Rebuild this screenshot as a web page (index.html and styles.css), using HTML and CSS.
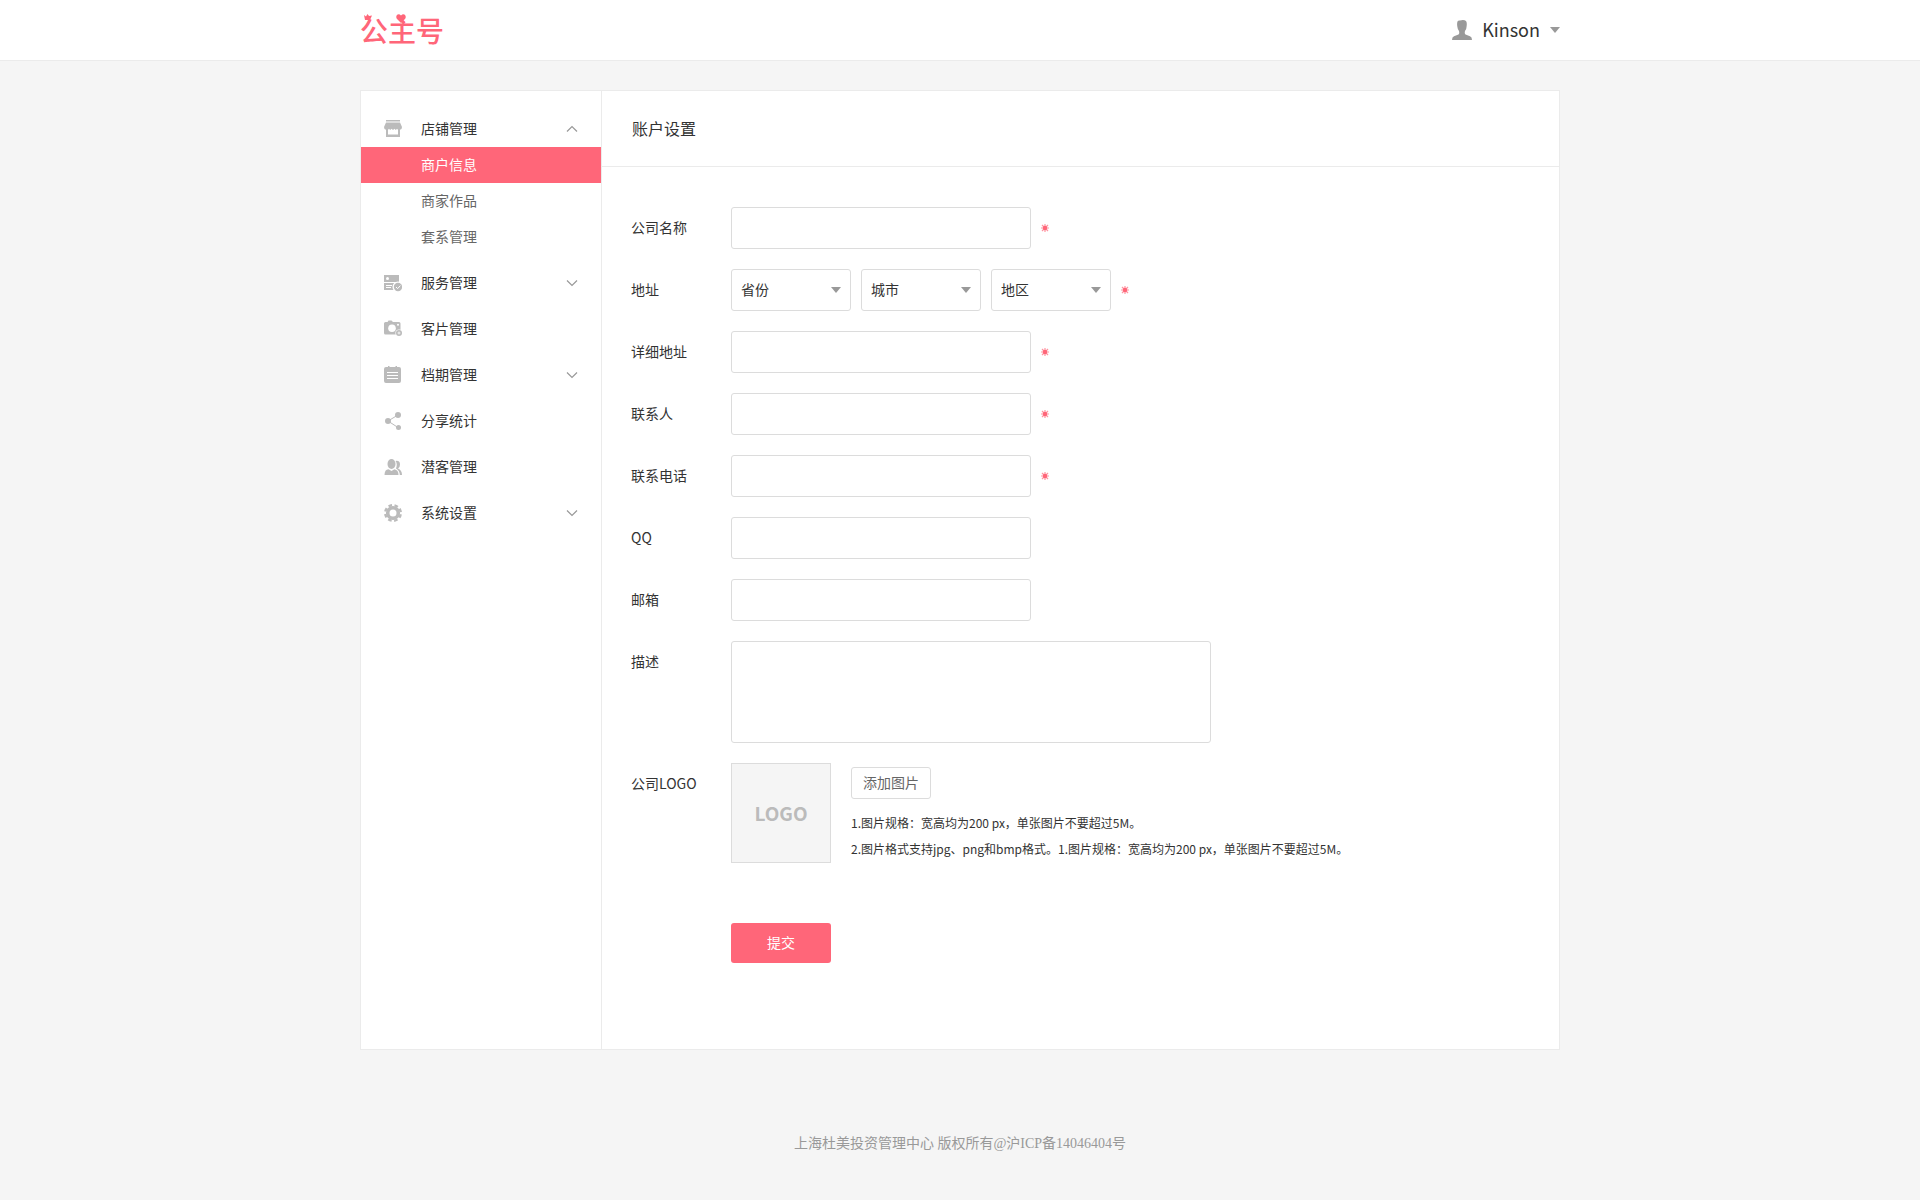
FILE: index.html
```html
<!DOCTYPE html>
<html lang="zh-CN">
<head>
<meta charset="utf-8">
<meta name="viewport" content="width=device-width, initial-scale=1">
<title>账户设置 - 公主号</title>
<link rel="stylesheet" href="styles.css">
</head>
<body>
<svg class="defs" aria-hidden="true">
  <symbol id="required" viewBox="0 0 8 8">
    <path d="M4 0v8M0 4h8M1 1l6 6M7 1l-6 6" fill="none" stroke="#ff6679" stroke-width="1.200" opacity=".7"/>
    <circle cx="4" cy="4" r="2.200" fill="#ff6679"/>
  </symbol>
  <symbol id="chevron" viewBox="0 0 12 8">
    <path d="M1 1.500l5 5 5-5" fill="none" stroke="#999" stroke-width="1.200"/>
  </symbol>
</svg>

<header class="topbar">
  <div class="container topbar-inner">
    <a class="brand" href="#">公主号
      <svg class="brand-crown" viewBox="0 0 8 7" aria-hidden="true"><path d="M0 1l2 1.500L3.500 0 5 2l3-.5L6 6H1z"/></svg>
      <svg class="brand-heart" viewBox="0 0 10 9" aria-hidden="true"><path d="M5 9L.8 4.700C-1 2 2-1.500 5 1.400 8-1.500 11 2 9.200 4.700z"/></svg>
    </a>
    <button class="user" type="button">
      <svg class="user-icon" viewBox="0 0 20 20" aria-hidden="true"><path d="M5.500 1.500Q6 .3 8 .5q4-1 6 .5 1.200 1.500.6 5.500 0 2.500-1.600 4.500-.7 3 .5 3.500l4.500 1.800Q20 17 20 20H0q0-3 2-3.700l4.500-1.800q1.200-.5.500-3.500-1.500-2-1.700-4.500-.5-3 .2-5z" fill="#999"/></svg>
      <span class="user-name">Kinson</span>
      <span class="caret"></span>
    </button>
  </div>
</header>

<div class="container panel">
  <nav class="sidebar">
    <section>
      <a class="nav-item" href="#">
        <svg class="nav-icon" viewBox="0 0 18 18"><path d="M2 0h14v1.500H2zM2 2.500h14L18 7q0 2.500-2 2.700V17H2V9.700Q0 9.500 0 7z"/><path d="M4 14.500V9.800l1-1 1.200 1.200L7.500 8.800 9 10l1.500-1.200L11.800 10 13 8.800l1 1v4.700z" fill="#fff"/></svg>
        <span>店铺管理</span>
        <svg class="chevron chevron-up"><use href="#chevron"/></svg>
      </a>
      <a class="sub-item active" href="#">商户信息</a>
      <a class="sub-item" href="#">商家作品</a>
      <a class="sub-item" href="#">套系管理</a>
    </section>
    <a class="nav-item" href="#">
      <svg class="nav-icon" viewBox="0 0 18 18"><path d="M0 1h15v15H0z"/><circle cx="3.500" cy="4.500" r="1.500" fill="#fff"/><path d="M0 8.500h15M2 11.500h6M2 13.500h5" fill="none" stroke="#fff"/><circle cx="14" cy="13" r="5.500" fill="#fff"/><circle cx="14" cy="13" r="4.200"/><path d="M12 13l1.600 1.600 2.800-3" fill="none" stroke="#fff"/></svg>
      <span>服务管理</span>
      <svg class="chevron"><use href="#chevron"/></svg>
    </a>
    <a class="nav-item" href="#">
      <svg class="nav-icon" viewBox="0 0 18 18"><path d="M1.500 2H3.500l1-1.500h3L9 2h6q1.500 0 1.500 1.500V14.500H1.500Q0 14.500 0 13V3.500Q0 2 1.500 2z"/><circle cx="8" cy="8.300" r="3.800" fill="#fff"/><circle cx="14" cy="4.800" r="1" fill="#fff"/><circle cx="15" cy="13" r="3.600" fill="#fff"/><circle cx="15" cy="13" r="3"/><path d="M15 11.500v3M13.500 13h3" stroke="#fff" stroke-width=".8"/></svg>
      <span>客片管理</span>
    </a>
    <a class="nav-item" href="#">
      <svg class="nav-icon" viewBox="0 0 18 18"><path d="M2 1h2V0h1.500v1h6V0H13v1h2q2 0 2 2v12q0 2-2 2H2q-2 0-2-2V3q0-2 2-2z"/><path d="M3 6.500h11M3 9.500h11M3 12.500h11" stroke="#fff"/></svg>
      <span>档期管理</span>
      <svg class="chevron"><use href="#chevron"/></svg>
    </a>
    <a class="nav-item" href="#">
      <svg class="nav-icon" viewBox="0 0 18 18"><path d="M14 3L4 9l10 6.500" fill="none" stroke="#bbb"/><circle cx="14" cy="3" r="3"/><circle cx="4" cy="9" r="3"/><circle cx="14.500" cy="15.500" r="2.500"/></svg>
      <span>分享统计</span>
    </a>
    <a class="nav-item" href="#">
      <svg class="nav-icon" viewBox="0 0 18 18"><ellipse cx="7.500" cy="6" rx="4" ry="5"/><path d="M.5 17q0-5.500 4-5.800L7.500 13l3-1.800Q14.500 12 14.500 17zM12 10.500q1.800-4.500-.5-7.500 4.500-.8 4.500 3.500 0 3-2 4 4 1.500 4 6.500h-2.200q0-4.500-3.800-6.500z"/></svg>
      <span>潜客管理</span>
    </a>
    <a class="nav-item" href="#">
      <svg class="nav-icon" viewBox="0 0 18 18"><circle cx="9" cy="9" r="5.300" fill="none" stroke="#bbb" stroke-width="3.600"/><circle cx="9" cy="9" r="7.800" fill="none" stroke="#bbb" stroke-width="2.400" stroke-dasharray="3.600 2.526" stroke-dashoffset="-1.300"/></svg>
      <span>系统设置</span>
      <svg class="chevron"><use href="#chevron"/></svg>
    </a>
  </nav>

  <main class="content">
    <h1 class="title">账户设置</h1>
    <form class="form">
      <div class="row">
        <label class="label" for="company">公司名称</label>
        <input class="field" id="company" type="text" required>
        <svg class="required"><use href="#required"/></svg>
      </div>
      <div class="row">
        <label class="label" for="province">地址</label>
        <div class="selects">
          <div class="select"><select class="field" id="province"><option>省份</option></select></div>
          <div class="select"><select class="field" aria-label="城市"><option>城市</option></select></div>
          <div class="select"><select class="field" aria-label="地区"><option>地区</option></select></div>
        </div>
        <svg class="required"><use href="#required"/></svg>
      </div>
      <div class="row">
        <label class="label" for="address">详细地址</label>
        <input class="field" id="address" type="text" required>
        <svg class="required"><use href="#required"/></svg>
      </div>
      <div class="row">
        <label class="label" for="contact">联系人</label>
        <input class="field" id="contact" type="text" required>
        <svg class="required"><use href="#required"/></svg>
      </div>
      <div class="row">
        <label class="label" for="phone">联系电话</label>
        <input class="field" id="phone" type="tel" required>
        <svg class="required"><use href="#required"/></svg>
      </div>
      <div class="row">
        <label class="label" for="qq">QQ</label>
        <input class="field" id="qq" type="text">
      </div>
      <div class="row">
        <label class="label" for="email">邮箱</label>
        <input class="field" id="email" type="email">
      </div>
      <div class="row">
        <label class="label" for="description">描述</label>
        <textarea class="field description" id="description"></textarea>
      </div>
      <div class="row">
        <span class="label">公司LOGO</span>
        <div class="logo-preview">LOGO</div>
        <div class="upload">
          <button class="add-image" type="button">添加图片</button>
          <p>1.图片规格：宽高均为200 px，单张图片不要超过5M。</p>
          <p>2.图片格式支持jpg、png和bmp格式。1.图片规格：宽高均为200 px，单张图片不要超过5M。</p>
        </div>
      </div>
      <button class="submit" type="submit">提交</button>
    </form>
  </main>
</div>

<footer class="footer">上海杜美投资管理中心 版权所有@沪ICP备14046404号</footer>
</body>
</html>
```
FILE: styles.css
```css
* { box-sizing: border-box; }

body {
  margin: 0;
  background: #f5f5f5;
  color: #333;
  font: 14px/20px "Noto Sans CJK SC", sans-serif;
}

a { color: inherit; text-decoration: none; }
button, input, select, textarea { font: inherit; color: inherit; }
button { cursor: pointer; }
p, h1 { margin: 0; }
.defs { display: none; }

.container {
  width: 100%;
  max-width: 1200px;
  margin: 0 auto;
}

.topbar { background: #fff; border-bottom: 1px solid #ebebeb; }

.topbar-inner {
  display: flex;
  align-items: center;
  justify-content: space-between;
  height: 60px;
}

.brand {
  position: relative;
  color: #ff6679;
  font-size: 28px;
  font-weight: 500;
  line-height: 40px;
}

.brand svg { position: absolute; fill: #ff6679; }
.brand-crown { left: 4px; top: 4px; width: 8px; height: 7px; }
.brand-heart { left: 36px; top: 4px; width: 10px; height: 9px; }

.user {
  display: flex;
  align-items: center;
  gap: 10px;
  padding: 0;
  border: 0;
  background: none;
  font-size: 18px;
}

.user-icon { width: 20px; height: 20px; }
.user-name { padding-bottom: 2px; }

.caret, .select::after {
  content: "";
  border: solid transparent;
  border-width: 6px 5px 0;
  border-top-color: #999;
}

.panel {
  display: flex;
  margin-top: 29px;
  min-height: 960px;
  background: #fff;
  border: 1px solid #ebebeb;
}

.sidebar {
  display: flex;
  flex: none;
  flex-direction: column;
  gap: 8px;
  width: 241px;
  padding-top: 18px;
  border-right: 1px solid #ebebeb;
}

.nav-item {
  display: flex;
  align-items: center;
  gap: 19px;
  height: 38px;
  padding: 0 23px;
}

.nav-icon { width: 18px; height: 18px; margin-top: 2px; fill: #bbb; }
.chevron { width: 12px; height: 8px; margin: 2px 0 0 auto; }
.chevron-up { transform: rotate(180deg); }

.sub-item {
  display: block;
  height: 36px;
  padding-left: 60px;
  color: #666;
  line-height: 34px;
}

.sub-item.active { background: #ff6679; color: #fff; }

.content { flex: 1; min-width: 0; }

.title {
  padding: 0 30px 1px;
  border-bottom: 1px solid #ebebeb;
  font-size: 16px;
  font-weight: 400;
  line-height: 74px;
}

.form {
  display: flex;
  flex-direction: column;
  gap: 20px;
  padding: 40px 29px;
}

.row { display: flex; align-items: flex-start; }
.label { flex: none; width: 100px; line-height: 40px; }

.field {
  width: 300px;
  height: 42px;
  padding: 0 9px;
  border: 1px solid #dcdcdc;
  border-radius: 3px;
  background: #fff;
}

.description { width: 480px; height: 102px; padding: 9px; resize: none; }

.selects { display: flex; gap: 10px; }
.select { position: relative; width: 120px; }
.select .field { width: 100%; padding-bottom: 2px; appearance: none; }
.select::after { position: absolute; top: 18px; right: 10px; pointer-events: none; }

.required { width: 8px; height: 8px; margin: 17px 10px; }

.logo-preview {
  width: 100px;
  border: 1px solid #dcdcdc;
  background: #f5f5f5;
  color: #bbb;
  font-size: 19px;
  font-weight: 700;
  line-height: 98px;
  text-align: center;
}

.upload { padding: 4px 0 0 20px; font-size: 12px; line-height: 26px; }

.add-image {
  display: block;
  width: 80px;
  height: 32px;
  margin-bottom: 11px;
  padding: 0 0 2px;
  border: 1px solid #dcdcdc;
  border-radius: 3px;
  background: #fff;
  color: #666;
  font-size: 14px;
  line-height: 20px;
}

.submit {
  width: 100px;
  height: 40px;
  margin: 40px 0 0 100px;
  padding: 0 0 2px;
  border: 0;
  border-radius: 3px;
  background: #ff6679;
  color: #fff;
}

.footer {
  padding: 84px 0 46px;
  color: #999;
  font-family: "Liberation Serif", "Noto Sans CJK SC", serif;
  text-align: center;
}
```
